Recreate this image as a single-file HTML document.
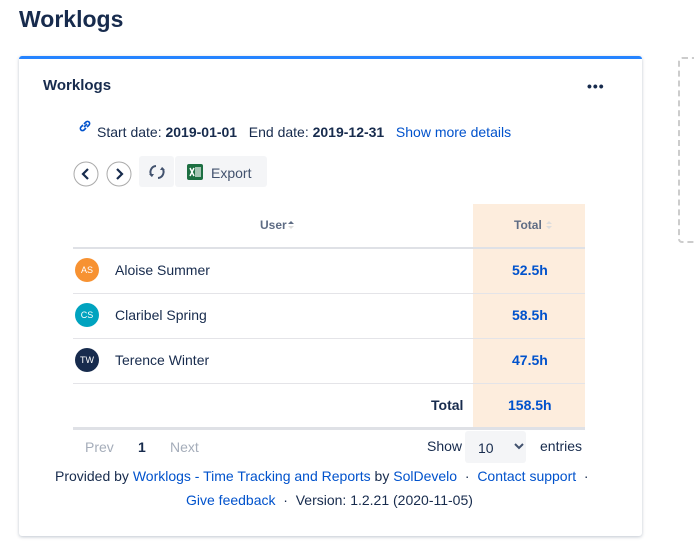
<!DOCTYPE html>
<html><head><style>
body{margin:0;width:694px;height:559px;background:#fff;font-family:"Liberation Sans",sans-serif;color:#172b4d;position:relative;overflow:hidden}
.a{position:absolute}
h1{position:absolute;left:19px;top:6px;margin:0;font-size:23px;font-weight:bold;color:#172b4d}
.card{left:19px;top:56px;width:623px;height:477px;background:#fff;border-top:3px solid #2684ff;border-radius:3px;box-shadow:0 1px 3px rgba(9,30,66,.25)}
.dash{left:678px;top:57px;width:40px;height:182px;border:2px dashed #ccc;border-radius:4px}
.t{font-size:14px;white-space:nowrap}
.b{font-weight:bold}
.lk{color:#0052cc}
.row{left:73px;width:512px;height:44px;border-bottom:1px solid #e4e4e8}
.av{width:24px;height:24px;border-radius:50%;color:#fff;font-size:9px;text-align:center;line-height:24px}
</style></head><body>
<h1>Worklogs</h1>
<div class="a dash"></div>
<div class="a card"></div>
<div class="a t b" style="left:43px;top:77px;font-size:15px">Worklogs</div>
<div class="a b" style="left:587px;top:78px;font-size:14px;letter-spacing:1px">•••</div>
<svg class="a" style="left:78px;top:119px" width="14" height="14" viewBox="0 0 14 14"><path d="M6 8l3-3M5 6l-2 2a2 2 0 003 3l2-2M9 8l2-2a2 2 0 00-3-3L6 5" stroke="#0052cc" stroke-width="1.6" fill="none"/></svg>
<div class="a t" style="left:97px;top:124px">Start date: <b>2019-01-01</b>&nbsp;&nbsp; End date: <b>2019-12-31</b>&nbsp;&nbsp; <span class="lk">Show more details</span></div>
<svg class="a" style="left:73px;top:161px" width="26" height="26" viewBox="0 0 26 26"><circle cx="13" cy="13" r="12" fill="#fff" stroke="#aaa"/><path d="M15 8l-5 5 5 5" stroke="#172b4d" stroke-width="2.2" fill="none"/></svg>
<svg class="a" style="left:106px;top:161px" width="26" height="26" viewBox="0 0 26 26"><circle cx="13" cy="13" r="12" fill="#fff" stroke="#aaa"/><path d="M11 8l5 5-5 5" stroke="#172b4d" stroke-width="2.2" fill="none"/></svg>
<div class="a" style="left:139px;top:156px;width:35px;height:31px;background:#f4f5f7;border-radius:3px"></div>
<svg class="a" style="left:148px;top:163px" width="18" height="18" viewBox="0 0 18 18"><path d="M8 3A6 6 0 004 13M10 15a6 6 0 004-10" stroke="#42526e" stroke-width="2" fill="none"/><path d="M1 11l3 3 2-3zM17 7l-3-3-2 3z" fill="#42526e"/></svg>
<div class="a" style="left:175px;top:156px;width:92px;height:31px;background:#f4f5f7;border-radius:3px"></div>
<svg class="a" style="left:187px;top:164px" width="16" height="16" viewBox="0 0 16 16"><rect width="16" height="16" rx="2" fill="#1d6f42"/><rect x="8" y="3" width="6" height="10" fill="#fff" opacity=".6"/><path d="M3 4l4 8M7 4l-4 8" stroke="#fff" stroke-width="1.5"/></svg>
<div class="a t" style="left:211px;top:165px;color:#42526e">Export</div>
<div class="a" style="left:473px;top:204px;width:112px;height:224px;background:#fdeddd"></div>
<div class="a" style="left:73px;top:247px;width:512px;height:2px;background:#dfe1e6"></div>
<div class="a b" style="left:260px;top:218px;font-size:12px;color:#5e6c84">User</div>
<svg class="a" style="left:288px;top:220px" width="6" height="10" viewBox="0 0 6 10"><path d="M0 4l3-3 3 3z" fill="#5e6c84"/><path d="M0 6l3 3 3-3z" fill="#ddd"/></svg>
<div class="a b" style="left:514px;top:218px;font-size:12px;color:#5e6c84">Total</div>
<svg class="a" style="left:546px;top:220px" width="6" height="10" viewBox="0 0 6 10"><path d="M0 4l3-3 3 3zM0 6l3 3 3-3z" fill="#ddd"/></svg>
<div class="a row" style="top:249px"></div>
<div class="a row" style="top:294px"></div>
<div class="a row" style="top:339px"></div>
<div class="a av" style="left:75px;top:258px;background:#f79232">AS</div>
<div class="a av" style="left:75px;top:303px;background:#00a3bf">CS</div>
<div class="a av" style="left:75px;top:348px;background:#172b4d">TW</div>
<div class="a t" style="left:115px;top:262px">Aloise Summer</div>
<div class="a t" style="left:115px;top:307px">Claribel Spring</div>
<div class="a t" style="left:115px;top:352px">Terence Winter</div>
<div class="a t b lk" style="left:512px;top:262px">52.5h</div>
<div class="a t b lk" style="left:512px;top:307px">58.5h</div>
<div class="a t b lk" style="left:512px;top:352px">47.5h</div>
<div class="a t b" style="left:431px;top:397px">Total</div>
<div class="a t b lk" style="left:508px;top:397px">158.5h</div>
<div class="a" style="left:73px;top:427px;width:512px;height:3px;background:#dfe1e6"></div>
<div class="a t" style="left:85px;top:439px;color:#a5adba">Prev</div>
<div class="a t b" style="left:138px;top:439px">1</div>
<div class="a t" style="left:170px;top:439px;color:#a5adba">Next</div>
<div class="a t" style="left:427px;top:438px">Show</div>
<div class="a" style="left:465px;top:431px;width:61px;height:32px;background:#f4f5f7;border-radius:3px"></div>
<div class="a t" style="left:478px;top:440px">10</div>
<svg class="a" style="left:513px;top:442px" width="12" height="8" viewBox="0 0 12 8"><path d="M2 2l4 4 4-4" stroke="#42526e" stroke-width="2" fill="none"/></svg>
<div class="a t" style="left:540px;top:438px">entries</div>
<div class="a t" style="left:55px;top:468px">Provided by <span class="lk">Worklogs - Time Tracking and Reports</span> by <span class="lk">SolDevelo</span> &nbsp;·&nbsp; <span class="lk">Contact support</span> &nbsp;·</div>
<div class="a t" style="left:186px;top:492px"><span class="lk">Give feedback</span> &nbsp;·&nbsp; Version: 1.2.21 (2020-11-05)</div>
</body></html>
